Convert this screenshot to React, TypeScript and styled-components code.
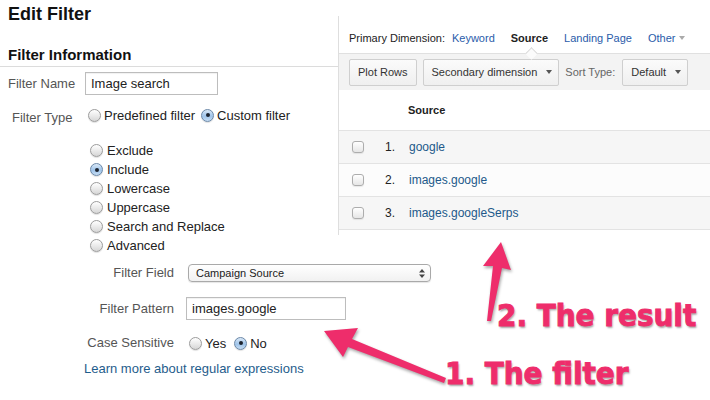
import React from 'react';
import styled, { createGlobalStyle } from 'styled-components';

const Global = createGlobalStyle`
  html, body { margin: 0; padding: 0; background: #fff; }
  body { font-family: "Liberation Sans", Arial, sans-serif; }
`;

const Stage = styled.div`
  position: relative;
  width: 710px;
  height: 400px;
  overflow: hidden;
  display: grid;
  grid-template-columns: 338px 372px;
  grid-template-rows: auto 1fr;
  align-items: start;
`;

/* ---------- left: Edit Filter form ---------- */
const LeftTop = styled.div`
  grid-column: 1;
  grid-row: 1;
`;

const Title = styled.h1`
  margin: 3px 0 0 8px;
  font-size: 18px;
  line-height: 22px;
  font-weight: bold;
  color: #111;
`;

const SectionHead = styled.h2`
  margin: 21px 0 0;
  padding: 0 0 2px 8px;
  font-size: 15px;
  line-height: 18px;
  font-weight: bold;
  color: #111;
  border-bottom: 1px solid #dcdcdc;
`;

const NameRow = styled.div`
  display: flex;
  align-items: center;
  margin-top: 5px;
  padding-left: 8px;
`;

const TypeRow = styled.div`
  display: flex;
  align-items: flex-start;
  margin-top: 12px;
  padding-left: 12px;
`;

const Label = styled.span<{ $w?: number; $drop?: number }>`
  display: inline-block;
  width: ${(p) => (p.$w ? `${p.$w}px` : 'auto')};
  padding-top: ${(p) => p.$drop ?? 0}px;
  font-size: 13px;
  line-height: 16px;
  color: #555;
`;

const TextBox = styled.div<{ $w: number }>`
  box-sizing: border-box;
  width: ${(p) => p.$w}px;
  height: 23px;
  border: 1px solid #bdbdbd;
  box-shadow: inset 0 1px 1px rgba(0, 0, 0, 0.06);
  padding: 0 5px;
  display: flex;
  align-items: center;
  font-size: 13px;
  color: #222;
  background: #fff;
`;

const Option = styled.label<{ $gapAfter?: number }>`
  display: inline-flex;
  align-items: center;
  gap: 3px;
  height: 16px;
  margin-right: ${(p) => p.$gapAfter ?? 0}px;
  font-size: 13px;
  color: #222;
  white-space: nowrap;
`;

const Radio = styled.span<{ $on?: boolean }>`
  position: relative;
  flex: none;
  box-sizing: border-box;
  width: 13px;
  height: 13px;
  border-radius: 50%;
  border: 1px solid ${(p) => (p.$on ? '#6b88a8' : '#9c9c9c')};
  background: ${(p) =>
    p.$on
      ? 'linear-gradient(#dbe9f7, #9fc4ea 55%, #c5dcf3)'
      : 'linear-gradient(#ffffff, #e9e9e9 55%, #d6d6d6)'};
  box-shadow: 0 1px 1px rgba(0, 0, 0, 0.12);
  &::after {
    content: '';
    display: ${(p) => (p.$on ? 'block' : 'none')};
    position: absolute;
    left: 50%;
    top: 50%;
    width: 4px;
    height: 4px;
    margin: -2px 0 0 -2px;
    border-radius: 50%;
    background: #1d2430;
  }
`;

const RadioList = styled.div`
  margin-top: 15px;
  padding-left: 90px;
  display: flex;
  flex-direction: column;
`;

const ListItem = styled(Option)`
  height: 19px;
  gap: 4px;
`;

const BottomForm = styled.div`
  grid-column: 1 / -1;
  grid-row: 2;
  margin-top: 9px;
  display: flex;
  flex-direction: column;
`;

const FormGrid = styled.div`
  display: grid;
  grid-template-columns: 174px auto;
  column-gap: 12px;
  row-gap: 15px;
  align-items: center;
  justify-items: start;
`;

const RightLabel = styled(Label)`
  justify-self: end;
  text-align: right;
`;

const Select = styled.div`
  box-sizing: border-box;
  width: 243px;
  height: 18px;
  margin-left: 2px;
  border: 1px solid #a9a9a9;
  border-radius: 4px;
  background: linear-gradient(#ffffff, #f1f1f1);
  box-shadow: 0 1px 1px rgba(0, 0, 0, 0.1);
  display: flex;
  align-items: center;
  justify-content: space-between;
  padding: 0 5px 0 7px;
  font-size: 11px;
  color: #222;
`;

const CaseRadios = styled.div`
  display: flex;
  align-items: center;
  margin-left: 3px;
`;

const LearnLink = styled.a`
  margin: 10px 0 0 84px;
  font-size: 13px;
  line-height: 16px;
  color: #1f5d8c;
  text-decoration: none;
`;

/* ---------- right: report table ---------- */
const Panel = styled.section`
  grid-column: 2;
  grid-row: 1;
  margin-top: 16px;
  border-left: 1px solid #dedede;
  background: #fff;
  padding-bottom: 5px;
`;

const DimRow = styled.div`
  box-sizing: border-box;
  height: 37px;
  padding: 7px 0 0 10px;
  display: flex;
  align-items: center;
  font-size: 11px;
  color: #222;
  white-space: nowrap;
`;

const DimItem = styled.span<{ $active?: boolean; $first?: boolean }>`
  display: inline-flex;
  align-items: center;
  gap: 4px;
  margin-left: ${(p) => (p.$first ? 7 : 16)}px;
  color: ${(p) => (p.$active ? '#222' : '#2a5caa')};
  font-weight: ${(p) => (p.$active ? 'bold' : 'normal')};
`;

const Band = styled.div`
  position: relative;
  box-sizing: border-box;
  height: 37px;
  border-top: 1px solid #e0e0e0;
  background: #f3f3f3;
  display: flex;
  align-items: center;
  gap: 6px;
  padding-left: 10px;
  &::before {
    content: '';
    position: absolute;
    left: 188px;
    top: -5px;
    width: 8px;
    height: 8px;
    background: #fbfbfb;
    border-top: 1px solid #d9d9d9;
    border-left: 1px solid #d9d9d9;
    transform: rotate(45deg);
  }
`;

const Button = styled.div<{ $pr?: number }>`
  box-sizing: border-box;
  height: 27px;
  padding: 0 ${(p) => p.$pr ?? 8}px 0 8px;
  border: 1px solid #cfcfcf;
  border-radius: 2px;
  background: linear-gradient(#fbfbfb, #efefef);
  display: flex;
  align-items: center;
  gap: 9px;
  font-size: 11px;
  color: #333;
  white-space: nowrap;
`;

const SortLabel = styled.span`
  font-size: 11px;
  color: #666;
  margin-right: 1px;
`;

const Caret = styled.span<{ $color?: string }>`
  width: 0;
  height: 0;
  border-left: 3.5px solid transparent;
  border-right: 3.5px solid transparent;
  border-top: 4px solid ${(p) => p.$color ?? '#555'};
`;

const HeaderRow = styled.div`
  box-sizing: border-box;
  height: 41px;
  border-bottom: 1px solid #e3e3e3;
  padding-left: 69px;
  display: flex;
  align-items: center;
  font-size: 11px;
  font-weight: bold;
  color: #222;
`;

const DataRow = styled.div<{ $shade: boolean }>`
  box-sizing: border-box;
  height: 33px;
  border-bottom: 1px solid #e3e3e3;
  background: ${(p) => (p.$shade ? '#f6f6f6' : '#fcfcfc')};
  padding-left: 13px;
  display: flex;
  align-items: center;
  font-size: 12px;
`;

const Check = styled.span`
  box-sizing: border-box;
  width: 12px;
  height: 12px;
  margin-right: 21px;
  border: 1px solid #adadad;
  border-radius: 3px;
  background: linear-gradient(#ffffff, #e6e6e6);
  box-shadow: 0 1px 1px rgba(0, 0, 0, 0.08);
`;

const Num = styled.span`
  width: 24px;
  color: #222;
`;

const RowLink = styled.a`
  color: #22598a;
  text-decoration: none;
`;

/* ---------- annotations ---------- */
const Arrows = styled.svg`
  position: absolute;
  left: 0;
  top: 0;
  width: 710px;
  height: 400px;
  pointer-events: none;
  filter: drop-shadow(1px 2px 1.5px rgba(0, 0, 0, 0.35));
`;

const Callout = styled.div<{ $x: number; $y: number }>`
  position: absolute;
  left: ${(p) => p.$x}px;
  top: ${(p) => p.$y}px;
  font-family: "DejaVu Sans Condensed", "DejaVu Sans", sans-serif;
  font-stretch: condensed;
  font-weight: bold;
  font-size: 31px;
  line-height: 31px;
  color: #ee2d6b;
  -webkit-text-stroke: 0.9px #ee2d6b;
  text-shadow: 1px 2px 2px rgba(0, 0, 0, 0.35);
  white-space: nowrap;
`;

const UpDown = () => (
  <svg width="6" height="9" viewBox="0 0 6 9">
    <path d="M3 0 L6 3.5 H0 Z M3 9 L6 5.5 H0 Z" fill="#444" />
  </svg>
);

const rows = ['google', 'images.google', 'images.googleSerps'];
const actions = ['Exclude', 'Include', 'Lowercase', 'Uppercase', 'Search and Replace', 'Advanced'];

export default function App() {
  return (
    <>
      <Global />
      <Stage>
        <LeftTop>
          <Title>Edit Filter</Title>
          <SectionHead>Filter Information</SectionHead>
          <NameRow>
            <Label $w={77}>Filter Name</Label>
            <TextBox $w={133}>Image search</TextBox>
          </NameRow>
          <TypeRow>
            <Label $w={76} $drop={3}>Filter Type</Label>
            <Option $gapAfter={6}>
              <Radio />
              Predefined filter
            </Option>
            <Option>
              <Radio $on />
              Custom filter
            </Option>
          </TypeRow>
          <RadioList>
            {actions.map((a) => (
              <ListItem key={a}>
                <Radio $on={a === 'Include'} />
                {a}
              </ListItem>
            ))}
          </RadioList>
        </LeftTop>

        <Panel>
          <DimRow>
            Primary Dimension:
            <DimItem $first>Keyword</DimItem>
            <DimItem $active>Source</DimItem>
            <DimItem>Landing Page</DimItem>
            <DimItem>
              Other <Caret $color="#aaa" />
            </DimItem>
          </DimRow>
          <Band>
            <Button>Plot Rows</Button>
            <Button $pr={6}>
              Secondary dimension <Caret />
            </Button>
            <SortLabel>Sort Type:</SortLabel>
            <Button $pr={6}>
              Default <Caret />
            </Button>
          </Band>
          <HeaderRow>Source</HeaderRow>
          {rows.map((r, i) => (
            <DataRow key={r} $shade={i !== 1}>
              <Check />
              <Num>{i + 1}.</Num>
              <RowLink>{r}</RowLink>
            </DataRow>
          ))}
        </Panel>

        <BottomForm>
          <FormGrid>
            <RightLabel>Filter Field</RightLabel>
            <Select>
              Campaign Source
              <UpDown />
            </Select>
            <RightLabel>Filter Pattern</RightLabel>
            <TextBox $w={160}>images.google</TextBox>
            <RightLabel>Case Sensitive</RightLabel>
            <CaseRadios>
              <Option $gapAfter={8}>
                <Radio />
                Yes
              </Option>
              <Option>
                <Radio $on />
                No
              </Option>
            </CaseRadios>
          </FormGrid>
          <LearnLink>Learn more about regular expressions</LearnLink>
        </BottomForm>

        <Arrows viewBox="0 0 710 400">
          <path
            d="M324 331 L358 328 L352 339 L446 378 L444 383 L348 347 L343 357 Z"
            fill="#ee2d6b"
          />
          <path
            d="M501 242 L511 270 L502 268 L491 321 L487 321 L493 266 L483 266 Z"
            fill="#ee2d6b"
          />
        </Arrows>
        <Callout $x={497} $y={300}>2. The result</Callout>
        <Callout $x={445} $y={358}>1. The filter</Callout>
      </Stage>
    </>
  );
}
